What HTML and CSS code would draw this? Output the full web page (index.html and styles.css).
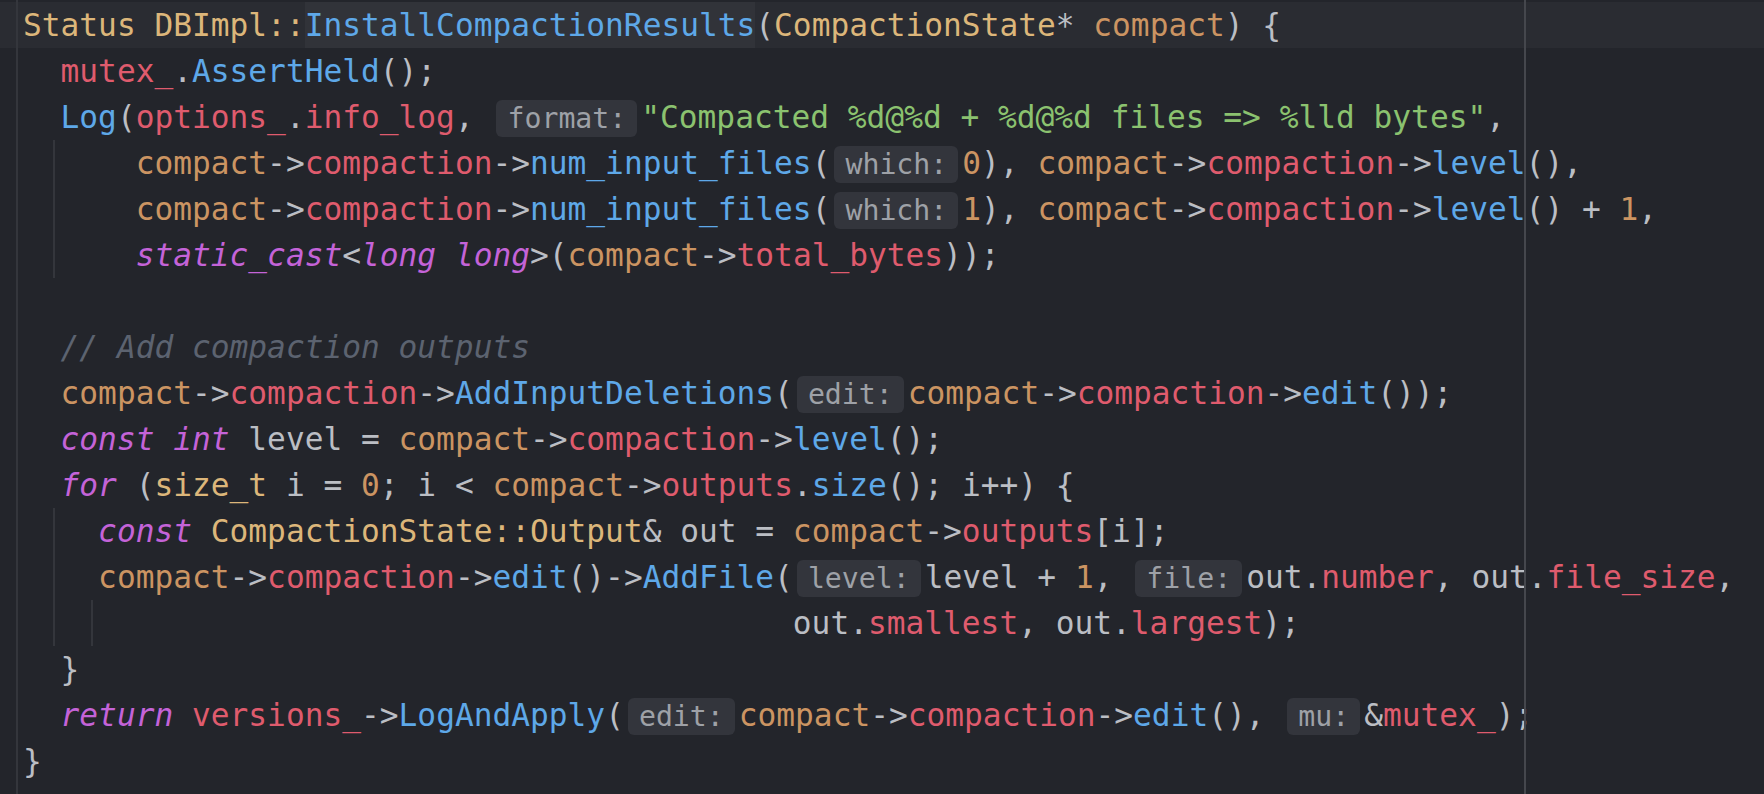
FILE: index.html
```html
<!DOCTYPE html>
<html>
<head>
<meta charset="utf-8">
<title>Editor</title>
<link rel="stylesheet" href="styles.css">
</head>
<body>
<div class="editor">
<div class="line current"><span class="y">Status</span> <span class="y">DBImpl::</span><span class="hl b">InstallCompactionResults</span>(<span class="y">CompactionState</span>* <span class="o">compact</span>) {</div>
<div class="line">  <span class="r">mutex_</span>.<span class="b">AssertHeld</span>();</div>
<div class="line">  <span class="b">Log</span>(<span class="r">options_</span>.<span class="r">info_log</span>, <span class="hint">format:</span><span class="g">"Compacted %d@%d + %d@%d files =&gt; %lld bytes"</span>,</div>
<div class="line">      <span class="o">compact</span>-&gt;<span class="r">compaction</span>-&gt;<span class="b">num_input_files</span>(<span class="hint">which:</span><span class="o">0</span>), <span class="o">compact</span>-&gt;<span class="r">compaction</span>-&gt;<span class="b">level</span>(),</div>
<div class="line">      <span class="o">compact</span>-&gt;<span class="r">compaction</span>-&gt;<span class="b">num_input_files</span>(<span class="hint">which:</span><span class="o">1</span>), <span class="o">compact</span>-&gt;<span class="r">compaction</span>-&gt;<span class="b">level</span>() + <span class="o">1</span>,</div>
<div class="line">      <span class="k">static_cast</span>&lt;<span class="k">long long</span>&gt;(<span class="o">compact</span>-&gt;<span class="r">total_bytes</span>));</div>
<div class="line"> </div>
<div class="line">  <span class="c">// Add compaction outputs</span></div>
<div class="line">  <span class="o">compact</span>-&gt;<span class="r">compaction</span>-&gt;<span class="b">AddInputDeletions</span>(<span class="hint">edit:</span><span class="o">compact</span>-&gt;<span class="r">compaction</span>-&gt;<span class="b">edit</span>());</div>
<div class="line">  <span class="k">const int</span> level = <span class="o">compact</span>-&gt;<span class="r">compaction</span>-&gt;<span class="b">level</span>();</div>
<div class="line">  <span class="k">for</span> (<span class="y">size_t</span> i = <span class="o">0</span>; i &lt; <span class="o">compact</span>-&gt;<span class="r">outputs</span>.<span class="b">size</span>(); i++) {</div>
<div class="line">    <span class="k">const</span> <span class="y">CompactionState::Output</span>&amp; out = <span class="o">compact</span>-&gt;<span class="r">outputs</span>[i];</div>
<div class="line">    <span class="o">compact</span>-&gt;<span class="r">compaction</span>-&gt;<span class="b">edit</span>()-&gt;<span class="b">AddFile</span>(<span class="hint">level:</span>level + <span class="o">1</span>, <span class="hint">file:</span>out.<span class="r">number</span>, out.<span class="r">file_size</span>,</div>
<div class="line">                                         out.<span class="r">smallest</span>, out.<span class="r">largest</span>);</div>
<div class="line">  }</div>
<div class="line">  <span class="k">return</span> <span class="r">versions_</span>-&gt;<span class="b">LogAndApply</span>(<span class="hint">edit:</span><span class="o">compact</span>-&gt;<span class="r">compaction</span>-&gt;<span class="b">edit</span>(), <span class="hint">mu:</span>&amp;<span class="r">mutex_</span>);</div>
<div class="line">}</div>
<div class="guide g0"></div>
<div class="guide g1"></div>
<div class="guide g2"></div>
<div class="guide g3"></div>
<div class="rmargin"></div>
</div>
</body>
</html>
```

FILE: styles.css
```css
html, body {
  margin: 0;
  padding: 0;
}
body {
  background: #23252b;
  width: 1764px;
  height: 794px;
  overflow: hidden;
}
.editor {
  position: relative;
  height: 794px;
  padding-top: 2px;
  box-sizing: border-box;
  font-family: "DejaVu Sans Mono", "Liberation Mono", monospace;
  font-size: 31.2px;
  color: #bbbec4;
}
.line {
  height: 46px;
  line-height: 46px;
  white-space: pre;
  padding-left: 23px;
}
.line.current {
  background: #2a2c32;
}
.hl {
  display: inline-block;
  background: #313339;
}
.y { color: #dcb67a; }
.o { color: #cb9462; }
.r { color: #df5b6d; }
.b { color: #5ea8e8; }
.g { color: #8bc26f; }
.k { color: #c463d8; font-style: italic; }
.c { color: #5c6370; font-style: italic; }
.hint {
  display: inline-block;
  font-size: 28.2px;
  line-height: 37px;
  padding: 0 11px;
  margin: 0 4px;
  border-radius: 6px;
  background: #33353c;
  color: #9ea1a7;
  font-style: normal;
}
.guide {
  position: absolute;
  width: 2px;
  background: #34363c;
}
.g0 { left: 16px; top: 0; bottom: 0; }
.g1 { left: 53px; top: 140px; height: 138px; }
.g2 { left: 53px; top: 508px; height: 138px; }
.g3 { left: 91px; top: 600px; height: 46px; }
.rmargin {
  position: absolute;
  left: 1524px;
  top: 0;
  bottom: 0;
  width: 2px;
  background: #45474d;
}
```
